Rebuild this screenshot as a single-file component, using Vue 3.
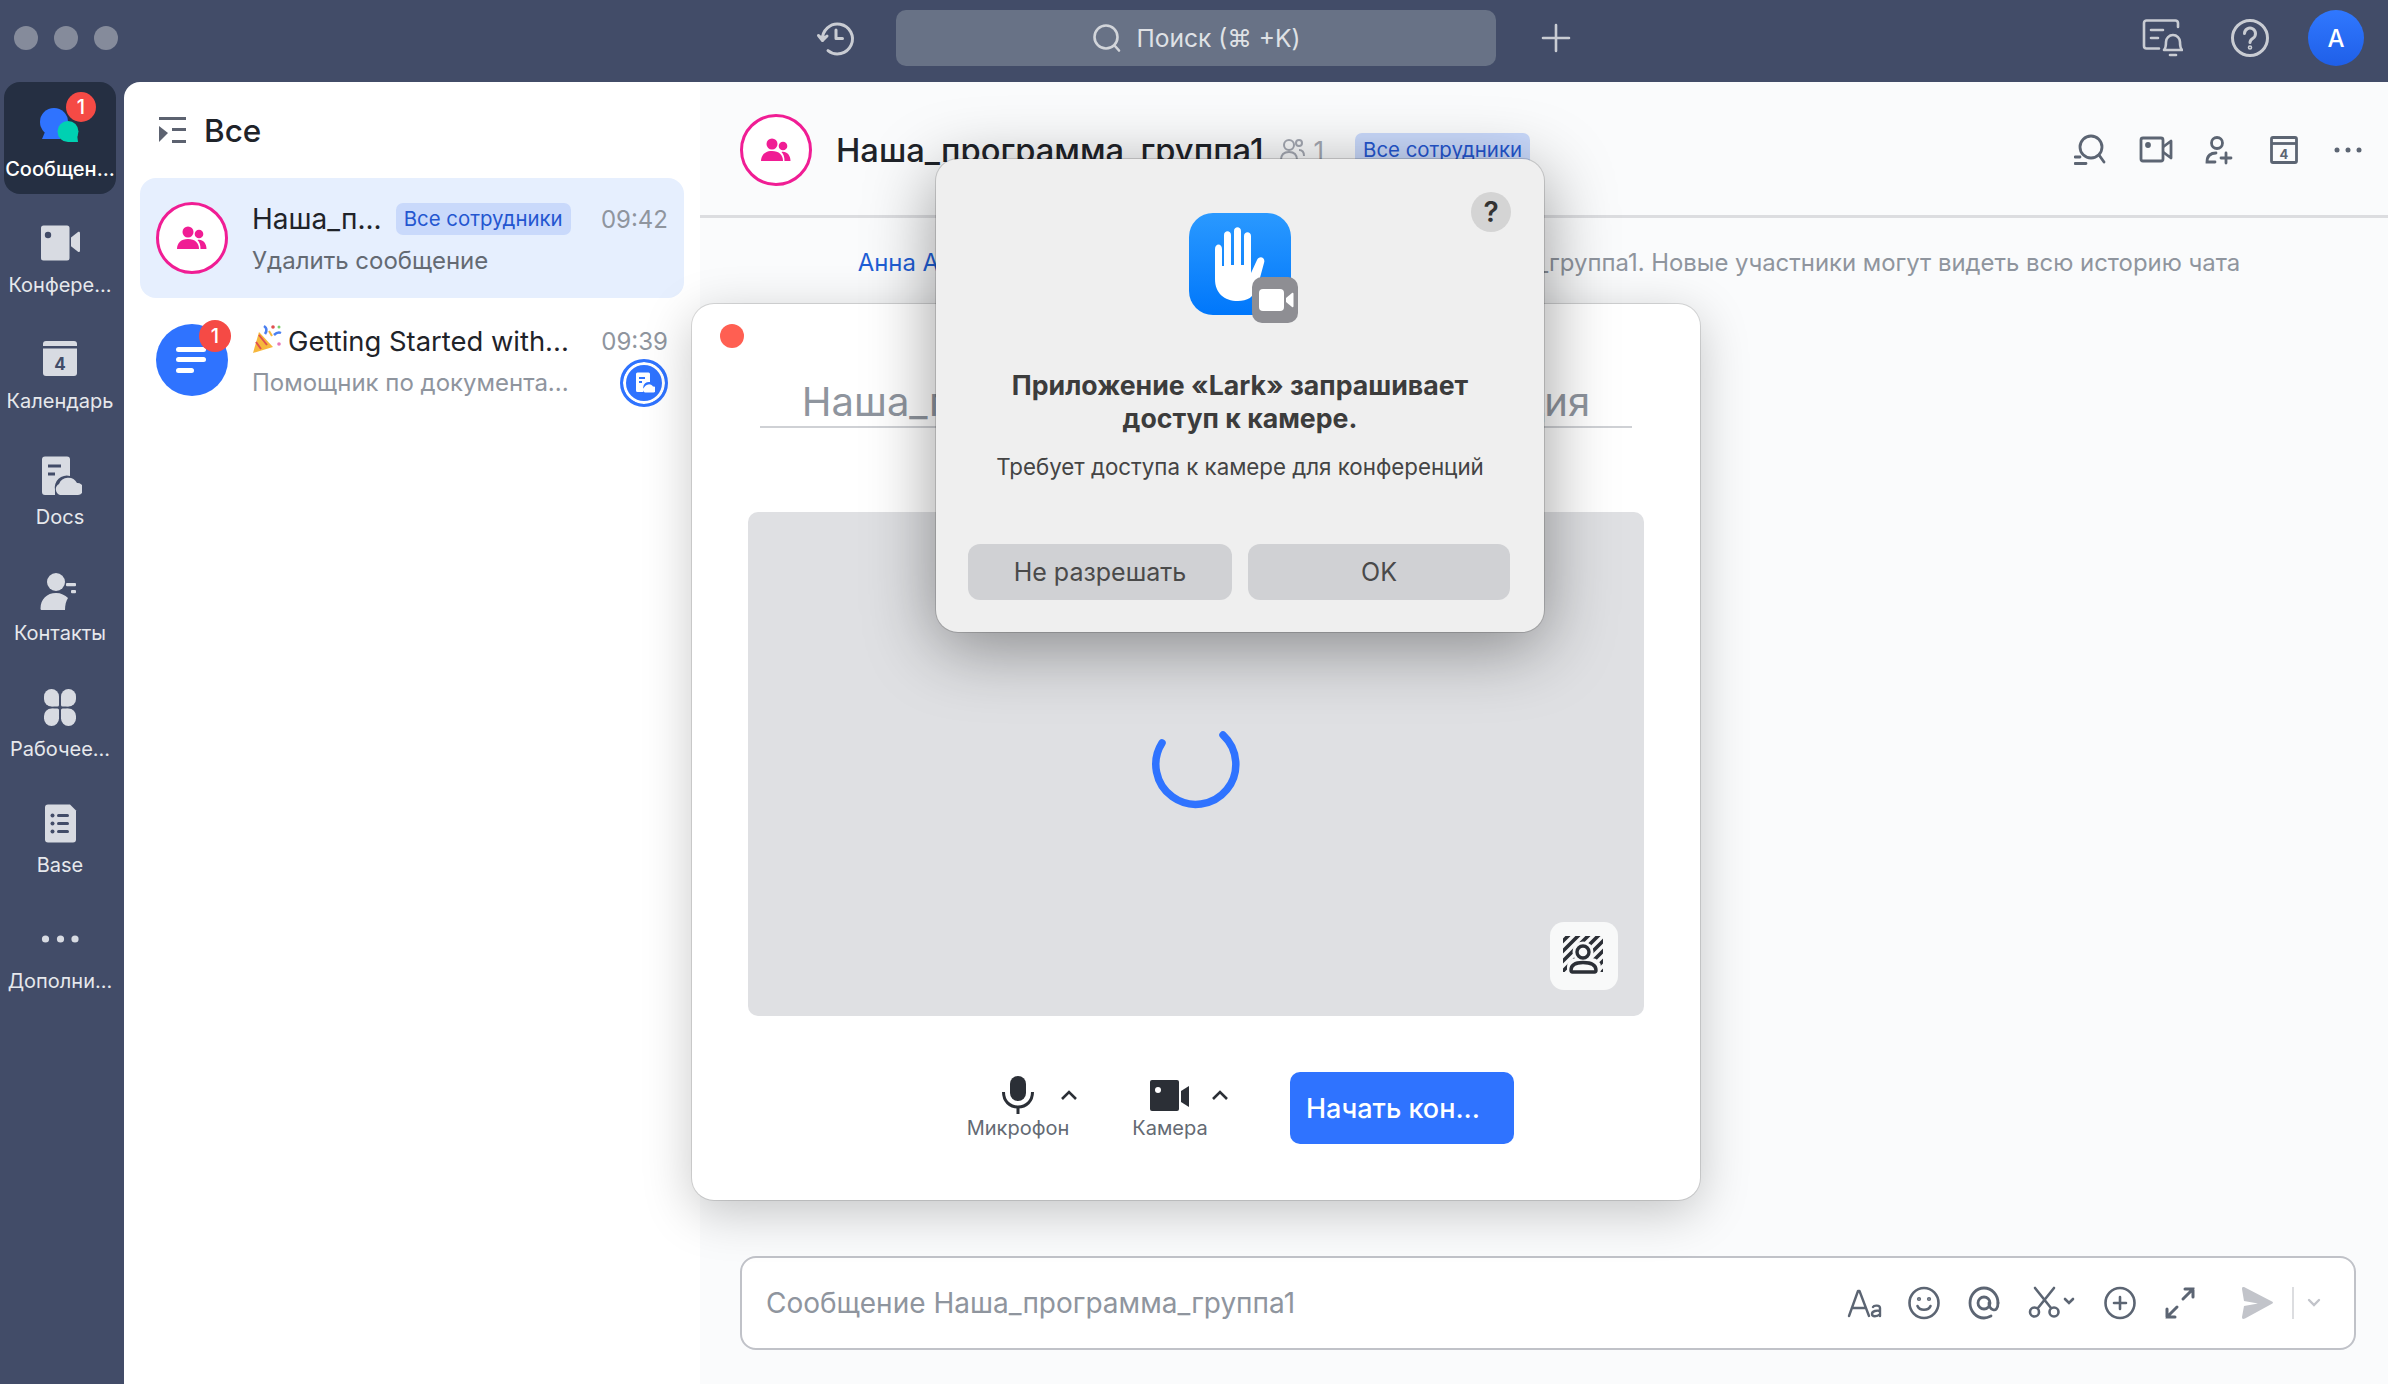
<script setup>
const sys = 'группа1. Новые участники могут видеть всю историю чата'
</script>

<template>
  <div class="app">
    <header class="topbar">
      <div class="lights"><i></i><i></i><i></i></div>
      <svg class="hist" width="40" height="40" viewBox="0 0 40 40" fill="none" stroke="#c9ccd3" stroke-width="3" stroke-linecap="round" stroke-linejoin="round"><path d="M6.5 22A15 15 0 1 1 12 32.6"/><path d="M2.5 17.5 6.5 22.5 11 18" fill="#c9ccd3"/><path d="M20 12v8.5h6.5"/></svg>
      <div class="search">
        <svg width="32" height="32" viewBox="0 0 32 32" fill="none" stroke="#d2d5da" stroke-width="2.6" stroke-linecap="round"><circle cx="15" cy="15" r="11.5"/><path d="M23.5 23.5 28 28.5"/></svg>
        <span>Поиск (⌘ +K)</span>
      </div>
      <svg class="plus" width="30" height="30" viewBox="0 0 30 30" stroke="#c9ccd3" stroke-width="2.6" stroke-linecap="round"><path d="M15 2v26M2 15h26"/></svg>
      <div class="top-right">
        <svg width="42" height="40" viewBox="0 0 42 40" fill="none" stroke="#c9ccd3" stroke-width="2.6" stroke-linecap="round" stroke-linejoin="round"><path d="M37 9V5a2.5 2.5 0 0 0-2.5-2.500h-29A2.500 2.500 0 0 0 3 5v23a2.500 2.500 0 0 0 2.500 2.500H18"/><path d="M10 12h12M10 20h7"/><path d="M23 32c2-2 2-4 2-8a7 7 0 0 1 14 0c0 4 0 6 2 8z"/><path d="M29 37h6"/></svg>
        <svg width="40" height="40" viewBox="0 0 40 40" fill="none" stroke="#c9ccd3" stroke-width="3" stroke-linecap="round"><circle cx="20" cy="20" r="17.500"/><path d="M14.500 15.500a5.500 5.500 0 1 1 8.500 4.700c-2 1.300-3 2.300-3 4.300"/><circle cx="20" cy="29.500" r=".8"/></svg>
        <div class="me">A</div>
      </div>
    </header>

    <div class="body">
      <nav class="rail">
        <div class="nav active">
          <div class="nav-icon">
            <svg width="44" height="44" viewBox="0 0 44 44"><circle cx="16" cy="18" r="14" fill="#2f73ff"/><path d="M7 28 4 35h18l2-7z" fill="#2f73ff"/><circle cx="30" cy="27.500" r="10.500" fill="#00d1b2"/><path d="M30 30h9l1 8H30z" fill="#00d1b2"/></svg>
            <span class="badge">1</span>
          </div>
          <span>Сообщен...</span>
        </div>
        <div class="nav">
          <div class="nav-icon"><svg width="44" height="44" viewBox="0 0 44 44" fill="#d8dbe2"><path d="M3 8a2.500 2.500 0 0 1 2.500-2.500H29a2.500 2.500 0 0 1 2.500 2.500v30a2.500 2.500 0 0 1-2.500 2.500H5.500A2.500 2.500 0 0 1 3 38z"/><path d="M33.500 18l7-5.500c1-.7 2-.2 2 1.200V31c0 1.400-1 1.900-2 1.200l-7-5.500z" transform="translate(-.5 -.5)"/><circle cx="10" cy="15" r="3.200" fill="#424c68"/></svg></div>
          <span>Конфере...</span>
        </div>
        <div class="nav">
          <div class="nav-icon"><svg width="44" height="44" viewBox="0 0 44 44"><path d="M5 8a3 3 0 0 1 3-3h28a3 3 0 0 1 3 3v2H5z" fill="#d8dbe2"/><path d="M5 12.500h34V37a3 3 0 0 1-3 3H8a3 3 0 0 1-3-3z" fill="#d8dbe2"/><text x="22" y="34" text-anchor="middle" font-family="Inter" font-weight="700" font-size="17" fill="#424c68">4</text></svg></div>
          <span>Календарь</span>
        </div>
        <div class="nav">
          <div class="nav-icon"><svg width="44" height="44" viewBox="1 -2 44 44"><path d="M5 5.500a3 3 0 0 1 3-3h22a3 3 0 0 1 3 3V22a12 12 0 0 0-15 14v5H8a3 3 0 0 1-3-3z" fill="#d8dbe2"/><path d="M11 12h13M11 20h7" stroke="#424c68" stroke-width="3"/><path d="M23 41a6 6 0 0 1-1-11 10 10 0 0 1 18-1 6 6 0 0 1 1 12z" fill="#d8dbe2"/></svg></div>
          <span>Docs</span>
        </div>
        <div class="nav">
          <div class="nav-icon"><svg width="44" height="44" viewBox="0 -3 44 44" fill="#d8dbe2"><circle cx="18" cy="11" r="9"/><path d="M4 39c-1 0-1.500-.5-1.500-1.500C2.500 28 9 22 18 22c5 0 9 2 12 5-2 3-3 7-3 12z"/><rect x="28" y="12" width="10" height="3.200" rx="1"/><rect x="33" y="19" width="5" height="3.200" rx="1"/></svg></div>
          <span>Контакты</span>
        </div>
        <div class="nav">
          <div class="nav-icon"><svg width="44" height="44" viewBox="0 -2 44 44" fill="#d8dbe2"><rect x="6" y="3" width="15" height="17.500" rx="7.500"/><rect x="13" y="12.500" width="8" height="8" rx="1.500"/><rect x="23" y="3" width="15" height="17.500" rx="7.500"/><rect x="23" y="12.500" width="8" height="8" rx="1.500"/><rect x="6" y="22.500" width="15" height="17.500" rx="7.500"/><rect x="13" y="22.500" width="8" height="8" rx="1.500"/><rect x="23" y="22.500" width="15" height="17.500" rx="7.500"/><rect x="23" y="22.500" width="8" height="8" rx="1.500"/></svg></div>
          <span>Рабочее...</span>
        </div>
        <div class="nav">
          <div class="nav-icon"><svg width="44" height="44" viewBox="0 -1.500 44 44"><path d="M7 6a3 3 0 0 1 3-3h22l6 6v29a3 3 0 0 1-3 3H10a3 3 0 0 1-3-3z" fill="#d8dbe2"/><g fill="#424c68"><circle cx="14.500" cy="14" r="2"/><circle cx="14.500" cy="22" r="2"/><circle cx="14.500" cy="30" r="2"/><rect x="19" y="12.500" width="12" height="3" rx="1.500"/><rect x="19" y="20.500" width="12" height="3" rx="1.500"/><rect x="19" y="28.500" width="12" height="3" rx="1.500"/></g></svg></div>
          <span>Base</span>
        </div>
        <div class="nav">
          <div class="nav-icon"><svg width="44" height="44" viewBox="0 -3 44 44" fill="#d8dbe2"><circle cx="7.500" cy="20" r="3.600"/><circle cx="22.500" cy="20" r="3.600"/><circle cx="37" cy="20" r="3.600"/></svg></div>
          <span>Дополни...</span>
        </div>
      </nav>

      <aside class="list">
        <div class="list-head">
          <svg width="30" height="30" viewBox="0 0 30 30" fill="#5c6270"><rect x="1" y="2" width="27" height="3"/><rect x="14" y="13" width="14" height="3"/><rect x="14" y="25" width="14" height="3"/><path d="M1 11l9 7-9 9z"/></svg>
          <span>Все</span>
        </div>
        <div class="row current">
          <div class="ava ring">
            <svg width="30" height="24" viewBox="0 0 30 24" fill="#f01d94"><circle cx="11" cy="6" r="5.500"/><circle cx="22" cy="8" r="4.300"/><path d="M0 23c0-6 4-10 11-10s11 4 11 10z"/><path d="M23.500 23c0-4-1-7-3-9 5-1 9 3 9 9z"/></svg>
          </div>
          <div class="row-main">
            <div class="line">
              <span class="name">Наша_п...</span>
              <span class="tag">Все сотрудники</span>
              <span class="time">09:42</span>
            </div>
            <div class="line sub dark">Удалить сообщение</div>
          </div>
        </div>
        <div class="row">
          <div class="ava blue">
            <svg width="36" height="30" viewBox="0 0 36 30" fill="#fff"><rect x="2" y="2" width="30" height="5" rx="2.500"/><rect x="2" y="12" width="30" height="5" rx="2.500"/><rect x="2" y="23" width="18" height="5" rx="2.500"/></svg>
            <span class="badge on-ava">1</span>
          </div>
          <div class="row-main">
            <div class="line">
              <svg class="popper" width="30" height="32" viewBox="0 0 30 32"><path d="M1 30 7 9l14 15z" fill="#f6b73c"/><path d="M4 19l5 7M7 12l8 10" stroke="#e0504e" stroke-width="2"/><path d="M12 3c3 2 3 5 1 8M22 12c3-3 5-3 7-2" fill="none" stroke="#4a7ff0" stroke-width="2.500"/><circle cx="21" cy="4" r="1.800" fill="#e0504e"/><circle cx="27" cy="4" r="1.500" fill="#7ccf6b"/><circle cx="27" cy="21" r="1.800" fill="#e878b8"/><path d="M17 8l3 5" stroke="#f6b73c" stroke-width="2"/></svg>
              <span class="name wide">Getting Started with...</span>
              <span class="time">09:39</span>
            </div>
            <div class="line sub">
              <span>Помощник по документа...</span>
              <span class="docbot">
                <svg width="22" height="24" viewBox="0 0 22 24"><path d="M3 3a1.500 1.500 0 0 1 1.500-1.500h11A1.500 1.500 0 0 1 17 3v8a6 6 0 0 0-7 6v4H4.500A1.500 1.500 0 0 1 3 19.500z" fill="#fff"/><path d="M6 7h6M6 11h3" stroke="#2f73ff" stroke-width="2"/><path d="M12 21.500a3 3 0 0 1-.500-5.500 5 5 0 0 1 8.500-.500 3 3 0 0 1 .500 6z" fill="#fff"/></svg>
              </span>
            </div>
          </div>
        </div>
      </aside>

      <main class="chat">
        <div class="chat-head">
          <div class="ava ring">
            <svg width="30" height="24" viewBox="0 0 30 24" fill="#f01d94"><circle cx="11" cy="6" r="5.500"/><circle cx="22" cy="8" r="4.300"/><path d="M0 23c0-6 4-10 11-10s11 4 11 10z"/><path d="M23.500 23c0-4-1-7-3-9 5-1 9 3 9 9z"/></svg>
          </div>
          <span class="chat-title">Наша_программа_группа1</span>
          <svg class="members" width="26" height="24" viewBox="0 0 26 24" fill="none" stroke="#a4a8b2" stroke-width="2"><circle cx="10" cy="7" r="5"/><path d="M2 22c0-5 3-8 8-8s8 3 8 8z"/><circle cx="20" cy="5" r="3"/><path d="M20 12c3 0 5 2 5 6"/></svg>
          <span class="count">1</span>
          <span class="tag head-tag">Все сотрудники</span>
          <div class="head-tools">
            <span><svg width="36" height="32" viewBox="0 0 36 32" fill="none" stroke="#5c6573" stroke-width="2.800" stroke-linecap="round"><circle cx="17" cy="13" r="11"/><path d="M25 21l5 7M1 23h5M1 29.500h11"/></svg></span>
            <span><svg width="34" height="28" viewBox="0 0 34 28" fill="none" stroke="#5c6573" stroke-width="2.800" stroke-linejoin="round"><rect x="2" y="2" width="22" height="23" rx="2"/><path d="M24 11l8-6v17l-8-6"/><circle cx="9" cy="9" r="1.500" fill="#5c6573"/></svg></span>
            <span><svg width="30" height="30" viewBox="0 0 30 30" fill="none" stroke="#5c6573" stroke-width="2.800" stroke-linecap="round"><circle cx="12" cy="8" r="5.500"/><path d="M11 18c-5 0-9 2-9 9h8M21 18v10M16 23h10"/></svg></span>
            <span><svg width="28" height="28" viewBox="0 0 28 28" fill="none" stroke="#5c6573" stroke-width="2.800"><rect x="1.500" y="1.500" width="25" height="25" rx="1.500"/><path d="M1.500 7.500h25"/><text x="14" y="22.500" text-anchor="middle" font-family="Inter" font-weight="700" font-size="13" fill="#5c6573" stroke="none">4</text></svg></span>
            <span><svg width="30" height="8" viewBox="0 0 30 8" fill="#5c6573"><circle cx="4" cy="4" r="2.500"/><circle cx="15" cy="4" r="2.500"/><circle cx="26" cy="4" r="2.500"/></svg></span>
          </div>
        </div>
        <p class="notice"><b>Анна Андреева</b> добавил(а) людей в чат Наша_программа_{{ sys }}</p>
        <div class="composer">
          <span class="ph">Сообщение Наша_программа_группа1</span>
          <div class="comp-tools">
            <svg class="aa" width="36" height="30" viewBox="0 0 36 30" fill="none" stroke="#5c6573" stroke-width="2.400" stroke-linecap="round" stroke-linejoin="round"><path d="M2 28 11 3h1.500L22 28M6 20h12"/><path d="M26 19c1-2 7-2 7 1v8M33 23c-3-1-8 0-8 3s5 3 8 0"/></svg>
            <svg width="32" height="34" viewBox="0 0 32 34" fill="none" stroke="#5c6573" stroke-width="2.600" stroke-linecap="round"><ellipse cx="16" cy="17" rx="14.500" ry="15"/><path d="M9.500 20c2 5 11 5 13 0"/><circle cx="11" cy="13" r=".8"/><circle cx="21" cy="13" r=".8"/></svg>
            <svg width="32" height="34" viewBox="0 0 32 34" fill="none" stroke="#5c6573" stroke-width="2.800" stroke-linecap="round"><path d="M30 17c0 12-10 6-9 0"/><path d="M30 17C30 9 24 2 16 2S2 9 2 17s6 15 14 15c3 0 5-1 7-2"/><circle cx="16" cy="17" r="6"/></svg>
            <svg class="cut" width="50" height="34" viewBox="0 0 50 34" fill="none" stroke="#5c6573" stroke-width="2.600" stroke-linecap="round"><circle cx="6.500" cy="26" r="4.500"/><circle cx="26" cy="26" r="4.500"/><path d="M10 22 26 2M23 22 7 2M37 13l4 4 4-4"/></svg>
            <svg width="32" height="34" viewBox="0 0 32 34" fill="none" stroke="#5c6573" stroke-width="2.600" stroke-linecap="round"><ellipse cx="16" cy="17" rx="14.500" ry="15"/><path d="M16 11v12M10 17h12"/></svg>
            <svg width="32" height="34" viewBox="0 0 32 34" fill="none" stroke="#5c6573" stroke-width="3" stroke-linecap="round"><path d="M19 13 29 3M21 3h8v8M13 21 3 31M3 23v8h8"/></svg>
            <svg class="send" width="34" height="34" viewBox="0 0 34 34" fill="#c2c4ca"><path d="M2 3c0-2 1-2.500 3-1.500l27 14c1.300.7 1.300 1.500 0 2.200L5 32.500c-2 1-3 .5-3-1.500l2-11 14-2.500L4 15z"/></svg>
            <i class="vr"></i>
            <svg width="14" height="10" viewBox="0 0 14 10" fill="none" stroke="#c2c4ca" stroke-width="2.400" stroke-linecap="round"><path d="M2 2l5 5 5-5"/></svg>
          </div>
        </div>
      </main>
    </div>

    <section class="meeting">
      <i class="close"></i>
      <div class="meet-name">Наша_программа_группа1 конференция</div>
      <div class="preview">
        <svg class="spinner" width="100" height="100" viewBox="-50 -50 100 100" fill="none" stroke="#2f73ff" stroke-width="7.500" stroke-linecap="round"><path d="M26-30A40 40 0 1 1-35-22"/></svg>
        <div class="blur-btn">
          <svg width="44" height="44" viewBox="0 0 44 44" fill="none" stroke="#2b2f36" stroke-linecap="butt">
            <defs><clipPath id="blurclip"><rect x="1" y="2" width="40" height="36"/></clipPath></defs>
            <g clip-path="url(#blurclip)" stroke-width="3.600">
              <path d="M-4 12 12-4M-4 22 22-4M-4 32 32-4M-4 42 42-4M6 42 46 2M16 42 46 12M26 42 46 22M36 42 46 32"/>
            </g>
            <circle cx="21" cy="18" r="10.500" fill="#f8f9f9" stroke="none"/>
            <rect x="5" y="24" width="34" height="20" rx="9" fill="#f8f9f9" stroke="none"/>
            <circle cx="21" cy="18" r="6" stroke-width="3.400"/>
            <path d="M10.500 38c-1 0-1.500-.7-1.500-1.700C9 31 13 28.500 21 28.500s13 2.500 13 7.800c0 1-.5 1.700-1.500 1.700z" stroke-width="3.400"/>
          </svg>
        </div>
      </div>
      <div class="controls">
        <div class="ctrl">
          <div class="ctrl-top">
            <span></span>
            <svg width="32" height="38" viewBox="0 0 32 38" fill="#2b2f36"><rect x="8" y="0" width="16" height="25" rx="8"/><path d="M1.500 16c0 9 6 15 14.500 15s14.500-6 14.500-15" fill="none" stroke="#2b2f36" stroke-width="3"/><rect x="14.500" y="30" width="3" height="8"/></svg>
            <svg class="chev" width="18" height="12" viewBox="0 0 18 12" fill="none" stroke="#2b2f36" stroke-width="2.600"><path d="M2 10l7-7 7 7"/></svg>
          </div>
          <span>Микрофон</span>
        </div>
        <div class="ctrl">
          <div class="ctrl-top">
            <span></span>
            <svg width="42" height="38" viewBox="0 0 42 38" fill="#2b2f36"><path d="M1 6a2 2 0 0 1 2-2h25a2 2 0 0 1 2 2v27a2 2 0 0 1-2 2H3a2 2 0 0 1-2-2z"/><path d="M32 15l8-5v21l-8-5z"/><circle cx="9" cy="14" r="3" fill="#fff"/></svg>
            <svg class="chev" width="18" height="12" viewBox="0 0 18 12" fill="none" stroke="#2b2f36" stroke-width="2.600"><path d="M2 10l7-7 7 7"/></svg>
          </div>
          <span>Камера</span>
        </div>
        <button class="start">Начать кон...</button>
      </div>
    </section>

    <section class="perm">
      <span class="perm-help">?</span>
      <div class="perm-icon">
        <svg width="110" height="112" viewBox="0 0 110 112">
          <defs><linearGradient id="pg" x1="0" y1="0" x2="0" y2="1"><stop offset="0" stop-color="#2a99ff"/><stop offset="1" stop-color="#0077fb"/></linearGradient></defs>
          <rect x="0" y="0" width="102" height="102" rx="24" fill="url(#pg)"/>
          <path d="M26 66V36c0-6 7-6 7 0v17h2V22c0-5 7-5 7 0v30h3V18c0-5 7-5 7 0v34h3V23c0-5 7-5 7 0v37l6-13c2-5 9-3 7 3L69 72c-4 13-11 16-20 16-14 0-23-8-23-22z" fill="#fff"/>
          <rect x="63" y="64" width="46" height="46" rx="10" fill="#8e8e93"/>
          <rect x="70" y="76" width="25" height="22" rx="4" fill="#fff"/>
          <path d="M97 85l6-5c.8-.6 1.500-.2 1.500.8v12.400c0 1-.7 1.400-1.500.8l-6-5z" fill="#fff"/>
        </svg>
      </div>
      <h2>Приложение «Lark» запрашивает<br>доступ к камере.</h2>
      <p>Требует доступа к камере для конференций</p>
      <div class="perm-btns">
        <button>Не разрешать</button>
        <button>OK</button>
      </div>
    </section>
  </div>
</template>

<style>
html, body { margin: 0; background: #424c68; }
</style>

<style scoped>
.app {
  position: relative;
  width: 2388px;
  height: 1384px;
  overflow: hidden;
  display: flex;
  flex-direction: column;
  background: #424c68;
  font-family: Inter, "Noto Sans", sans-serif;
  color: #1f2329;
}
.topbar {
  height: 82px;
  flex: none;
  box-sizing: border-box;
  padding-bottom: 6px;
  display: flex;
  align-items: center;
}
.lights { display: flex; gap: 16px; margin-left: 14px; width: 803px; }
.lights i { width: 24px; height: 24px; border-radius: 50%; background: #858b9b; }
.hist { margin-right: 40px; flex: none; margin-left: -1px; }
.search {
  width: 600px;
  height: 56px;
  border-radius: 10px;
  background: #687286;
  display: flex;
  align-items: center;
  justify-content: center;
  gap: 13px;
  color: #dfe1e5;
  font-size: 24.6px;
}
.plus { margin-left: 45px; }
.top-right { margin-left: auto; margin-right: 24px; display: flex; align-items: center; gap: 0; }
.top-right svg:nth-child(1) { margin-right: 47px; }
.top-right svg:nth-child(2) { margin-right: 38px; }
.me {
  width: 56px;
  height: 56px;
  border-radius: 50%;
  background: linear-gradient(#3078ff, #1f5fe8);
  color: #fff;
  display: flex;
  align-items: center;
  justify-content: center;
  font-size: 24px;
  font-weight: 500;
}
.body { flex: 1; display: flex; min-height: 0; }
.rail { width: 124px; flex: none; }
.nav {
  width: 112px;
  height: 112px;
  margin: 0 0 4px 4px;
  border-radius: 16px;
  box-sizing: border-box;
  padding-top: 22px;
  display: flex;
  flex-direction: column;
  align-items: center;
  color: #e6e8ec;
  font-size: 20px;
  line-height: 28px;
  white-space: nowrap;
}
.nav.active { background: #252f42; color: #fff; font-weight: 500; }
.nav-icon { position: relative; width: 44px; height: 44px; margin-bottom: 7px; display: flex; align-items: center; justify-content: center; }
.badge {
  position: absolute;
  right: -14px;
  top: -12px;
  min-width: 30px;
  height: 30px;
  border-radius: 50%;
  background: #f54a45;
  color: #fff;
  font-size: 20px;
  line-height: 30px;
  text-align: center;
  font-weight: 500;
}
.list {
  width: 576px;
  flex: none;
  background: #fff;
  border-radius: 16px 0 0 0;
  box-sizing: border-box;
  padding: 0 16px;
}
.list-head {
  height: 96px;
  display: flex;
  align-items: center;
  gap: 16px;
  padding-left: 18px;
  font-size: 31.5px;
  font-weight: 500;
}
.row { display: flex; height: 120px; width: 544px; box-sizing: border-box; padding: 0 16px; align-items: center; gap: 24px; border-radius: 16px; }
.row.current { background: #e6effe; margin-bottom: 2px; }
.ava { position: relative; width: 72px; height: 72px; box-sizing: border-box; border-radius: 50%; flex: none; display: flex; align-items: center; justify-content: center; }
.ava.ring { border: 3px solid #f01d94; background: #fff; }
.ava.blue { background: #2f73ff; }
.on-ava { top: -4px; right: -3px; width: 32px; height: 32px; line-height: 32px; }
.row-main { flex: 1; min-width: 0; padding-top: 3px; }
.line { display: flex; align-items: center; height: 40px; white-space: nowrap; }
.line + .line { margin-top: 1px; }
.name { font-size: 28px; margin-right: 14px; }
.name.wide { font-size: 27.4px; margin-left: 6px; margin-right: 0; }
.popper { flex: none; margin-top: -4px; }
.tag {
  display: inline-block;
  background: #c9d9fb;
  color: #2456d0;
  border-radius: 7px;
  height: 32px;
  line-height: 32px;
  padding: 0 8px;
  font-size: 20.4px;
}
.time { margin-left: auto; color: #8f959e; font-size: 24px; }
.sub { font-size: 24px; color: #8f959e; justify-content: space-between; position: relative; }
.sub.dark { color: #646a73; }
.docbot {
  width: 48px; height: 48px; box-sizing: border-box; border-radius: 50%;
  background: #2f73ff; border: 3px solid #2f73ff; box-shadow: inset 0 0 0 3px #fff;
  display: flex; align-items: center; justify-content: center; margin-top: 2px; flex: none;
  margin-left: -4px;
}
.chat { flex: 1; display: flex; flex-direction: column; background: #fafbfc; min-width: 0; }
.chat-head {
  height: 136px;
  flex: none;
  box-sizing: border-box;
  border-bottom: 3px solid #dcdde0;
  display: flex;
  align-items: center;
  padding: 3px 8px 0 40px;
}
.chat-title { font-size: 32.7px; font-weight: 500; margin-left: 24px; margin-right: 16px; }
.count { color: #a4a8b2; font-size: 26px; margin: 0 31px 0 8px; }
.head-tag { height: 34px; line-height: 34px; }
.members { flex: none; }
.head-tools { margin-left: auto; display: grid; grid-auto-flow: column; grid-auto-columns: 64px; align-items: center; justify-items: center; }
.head-tools span { display: flex; }
.notice { margin: 30px 0 0; padding-left: 10px; text-align: center; font-size: 23.9px; line-height: 30px; color: #8f959e; white-space: nowrap; }
.notice b { color: #1f5fd6; font-weight: 400; }
.composer {
  margin: auto 32px 34px 40px;
  height: 94px;
  box-sizing: border-box;
  background: #fff;
  border: 2px solid #c0c2c8;
  border-radius: 16px;
  padding: 0 24px;
  display: flex;
  align-items: center;
}
.ph { color: #8f959e; font-size: 28px; }
.comp-tools { margin-left: auto; padding-right: 9px; display: flex; align-items: center; gap: 28px; }
.aa { margin-right: -3px; }
.cut { margin-right: -2px; }
.send { margin-left: 16px; }
.vr { width: 2px; height: 32px; background: #dcdde0; margin: 0 -15px 0 -10px; }
.meeting {
  position: absolute;
  left: 692px;
  top: 304px;
  width: 1008px;
  height: 896px;
  box-sizing: border-box;
  padding-top: 20px;
  background: #fff;
  border-radius: 22px;
  box-shadow: 0 0 0 1px rgba(0,0,0,.12), 0 12px 50px rgba(0,0,0,.22);
}
.close { display: block; width: 24px; height: 24px; border-radius: 50%; background: #ff5f52; margin-left: 28px; }
.meet-name {
  margin: 31px 68px 0;
  height: 49px;
  box-sizing: border-box;
  border-bottom: 2px solid #cfd1d5;
  text-align: center;
  font-size: 40px;
  line-height: 46px;
  color: #8f959e;
  white-space: nowrap;
}
.preview {
  position: relative;
  margin: 84px 56px 0;
  height: 504px;
  border-radius: 10px;
  background: #dfe0e3;
  display: flex;
  align-items: center;
  justify-content: center;
}
.spinner { margin: 2px 0 0 2px; }
.blur-btn {
  position: absolute;
  right: 26px;
  bottom: 26px;
  width: 68px;
  height: 68px;
  border-radius: 14px;
  background: #f8f9f9;
  display: flex;
  align-items: center;
  justify-content: center;
}
.controls { display: flex; padding: 56px 0 0 250px; }
.ctrl { width: 152px; display: flex; flex-direction: column; align-items: center; font-size: 20px; color: #646a73; }
.ctrl-top { display: grid; grid-template-columns: 1fr auto 1fr; align-items: center; width: 100%; justify-items: center; height: 40px; margin: 3px 0 1px; }
.ctrl-top .chev { justify-self: start; margin-left: 26px; }
.ctrl:nth-child(2) .ctrl-top .chev { margin-left: 20px; }
.start {
  width: 224px;
  height: 72px;
  margin-left: 44px;
  border: 0;
  border-radius: 10px;
  background: #2f73ff;
  color: #fff;
  text-align: left;
  padding: 0 16px;
  font: 500 27px Inter, sans-serif;
}
.perm {
  position: absolute;
  left: 936px;
  top: 159px;
  width: 608px;
  height: 473px;
  box-sizing: border-box;
  background: #efefef;
  border-radius: 22px;
  box-shadow: 0 0 0 1px rgba(0,0,0,.15), 0 14px 70px rgba(0,0,0,.4);
  padding-top: 54px;
  text-align: center;
  color: #3c3c3c;
}
.perm-help {
  position: absolute;
  right: 33px;
  top: 33px;
  width: 40px;
  height: 40px;
  border-radius: 50%;
  background: #d4d4d4;
  font-size: 28px;
  font-weight: 600;
  line-height: 40px;
  color: #333;
}
.perm-icon { height: 112px; width: 110px; margin-left: 253px; }
.perm h2 { margin: 44px 0 0; font-size: 26.7px; line-height: 33px; font-weight: 700; }
.perm p { margin: 17px 0 0; font-size: 22.3px; line-height: 30px; color: #444; }
.perm-btns { position: absolute; left: 32px; right: 34px; bottom: 32px; display: grid; grid-template-columns: 264px 262px; gap: 16px; }
.perm-btns button {
  height: 56px;
  border: 0;
  border-radius: 12px;
  background: #d0d1d4;
  color: #4a4a4a;
  font: 400 25px Inter, sans-serif;
}
</style>
